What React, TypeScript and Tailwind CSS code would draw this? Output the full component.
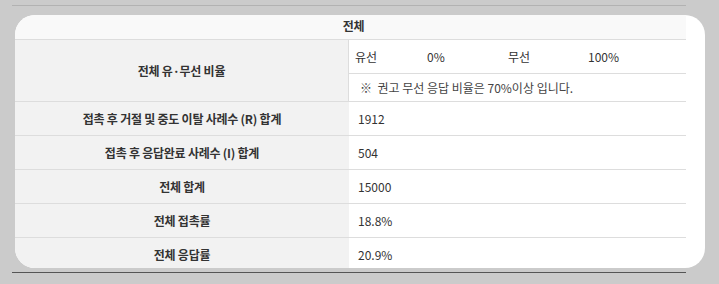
const font = { fontFamily: '"Noto Sans CJK KR", "Noto Sans", sans-serif' }

const rows = [
  { label: '접촉 후 거절 및 중도 이탈 사례수 (R) 합계', value: '1912' },
  { label: '접촉 후 응답완료 사례수 (I) 합계', value: '504' },
  { label: '전체 합계', value: '15000' },
  { label: '전체 접촉률', value: '18.8%' },
  { label: '전체 응답률', value: '20.9%' },
]

export default function App() {
  return (
    <div className="w-[719px] h-[284px] bg-[#cbcbcb] pt-[5px] text-[#333]" style={font}>
      <div className="ml-[12px] w-[674px] border-t border-b border-t-[#b2b2b2] border-b-[#555] pt-[9px] pb-[4px]">
        {/* card */}
        <div className="ml-[3px] w-[690px] h-[253px] bg-white rounded-[20px] overflow-hidden">
          <div className="w-[671px]">
            {/* header */}
            <div className="h-[25px] bg-[#f9f9f9] border-b border-[#dddddd] flex items-center justify-center">
              <span className="text-[12px] font-bold tracking-[-0.02em] pl-[6px] pb-[2px]">전체</span>
            </div>

            {/* wired / wireless ratio */}
            <div className="flex h-[62px] border-b border-[#dddddd]">
              <div className="w-[334px] shrink-0 bg-[#f2f2f2] border-r border-[#dddddd] flex items-center justify-center text-[12px] font-bold tracking-[-0.02em]">
                전체 유·무선 비율
              </div>
              <div className="flex-1 flex flex-col text-[12px]">
                <div className="h-[34px] border-b border-[#dddddd] flex items-center pl-[6px]">
                  <span className="w-[72px]">유선</span>
                  <span className="w-[81px]">0%</span>
                  <span className="w-[80px]">무선</span>
                  <span>100%</span>
                </div>
                <div className="flex-1 flex items-center pl-[11px] pt-[1px] text-[#444]">
                  ※&nbsp;&nbsp;권고 무선 응답 비율은 70%이상 입니다.
                </div>
              </div>
            </div>

            {rows.map((r) => (
              <div key={r.label} className="flex h-[34px] border-b border-[#dddddd]">
                <div className="w-[334px] shrink-0 bg-[#f2f2f2] flex items-center justify-center text-[12px] font-bold tracking-[-0.02em]">
                  {r.label}
                </div>
                <div className="flex-1 flex items-center pl-[9px] text-[12px]">{r.value}</div>
              </div>
            ))}
          </div>
        </div>
      </div>
    </div>
  )
}
